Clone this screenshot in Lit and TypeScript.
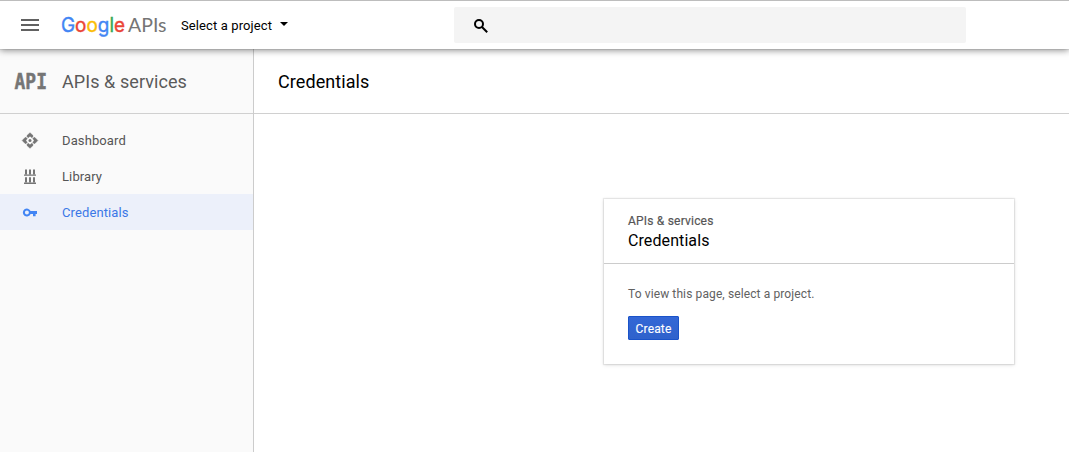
import { LitElement, html, css, svg } from "lit";
import { customElement } from "lit/decorators.js";

const dashboardIcon = svg`
  <svg viewBox="0 0 16 16" width="16" height="16" fill="currentColor">
    <circle cx="8" cy="8.5" r="1.5"/>
    <path d="M8 .7L11 3.6V4.6L9.9 5.7 8 4.2 6.1 5.7 5 4.6V3.6zM8 16.3L11 13.4V12.4L9.9 11.3 8 12.8 6.1 11.3 5 12.4V13.4zM.2 8.5L3.1 5.5H4.1L5.2 6.6 3.9 8.5 5.2 10.4 4.1 11.5H3.1zM15.8 8.5L12.9 5.5H11.9L10.8 6.6 12.1 8.5 10.8 10.4 11.9 11.5H12.9z" stroke="currentColor" stroke-width=".5"/>
  </svg>`;

const libraryIcon = svg`
  <svg viewBox="0 0 16 16" width="16" height="16" fill="currentColor">
    <path d="M3 1.4h2V6H3zM7 1.4h2V6H7zM11 1.4h2V6h-2zM2 6.4h12v1.4H2zM3 9.2h2v5H3zM7 9.2h2v5H7zM11 9.2h2v5h-2zM2 14.6h12V16H2zM3.4 6h1.2v1H3.4zM7.4 6h1.2v1H7.4zM11.4 6h1.2v1h-1.2z"/>
  </svg>`;

const keyIcon = svg`
  <svg viewBox="0 0 16 16" width="16" height="16" fill="currentColor">
    <path fill-rule="evenodd" d="M8.6 7.1A4 4 0 1 0 8.6 9.9H11v2.4h2.6V9.9H15V7.1zM4.9 6.5a2 2 0 1 1 0 4 2 2 0 0 1 0-4z"/>
  </svg>`;

@customElement("app-root")
export class AppRoot extends LitElement {
  static styles = css`
    :host {
      display: flex;
      flex-direction: column;
      height: 460px;
      padding-bottom: 8px;
      box-sizing: border-box;
      overflow: hidden;
      background: #fff;
      color: #000;
      font: 13px/20px Roboto, sans-serif;
    }
    svg { display: block; flex: none; overflow: visible; }
    .topbar {
      display: flex;
      align-items: center;
      flex: none;
      height: 49px;
      box-sizing: border-box;
      border-top: 1px solid #bdbdbd;
      background: #fff;
      box-shadow: 0 0 1px rgba(0,0,0,.35), 0 1px 7px rgba(0,0,0,.5);
      z-index: 1;
      padding-left: 21px;
    }
    .menu { display: grid; gap: 3px; width: 18px; margin: 0 23px 0 0; }
    .menu i { height: 2px; background: #616161; }
    .picker { display: flex; align-items: center; width: 273px; margin-left: 14px; margin-top: 2px; letter-spacing: .11px; }
    .caret { border: 4px solid transparent; border-top-color: #000; border-bottom: 0; margin: -5px 0 0 8px; }
    .search {
      display: flex;
      align-items: center;
      width: 512px;
      height: 36px;
      border-radius: 2px;
      background: #f4f4f4;
      padding: 2px 0 0 20px;
      box-sizing: border-box;
    }
    .body { display: flex; flex: 1; min-height: 0; }
    .side { width: 253px; border-right: 1px solid #ccc; background: #fafafa; color: #555; flex: none; }
    .side-head {
      display: flex;
      align-items: center;
      height: 64px;
      border-bottom: 1px solid #d0d0d0;
      padding-left: 14px;
      font-size: 18px;
      letter-spacing: .07px;
      color: #5a5a5a;
    }
    .side-head svg { margin-right: 15px; }
    .side-head span { padding-top: 2px; }
    .nav { padding-top: 8px; }
    .item { display: flex; align-items: center; gap: 24px; height: 36px; padding-left: 22px; letter-spacing: .11px; }
    .item span { padding-top: 2px; }
    .item svg { color: #757575; }
    .item.active { background: #ecf0fa; color: #3b78e7; }
    .item.active svg { color: #4285f4; }
    .main { flex: 1; display: flex; flex-direction: column; }
    .title { height: 64px; border-bottom: 1px solid #d0d0d0; padding-left: 24px; font-size: 18px; line-height: 65px; letter-spacing: .08px; }
    .card {
      width: 410px;
      height: 165px;
      margin: 85px 0 0 350px;
      background: #fff;
      box-shadow: 0 0 1px 1px rgba(0,0,0,.08), 0 1px 4px rgba(0,0,0,.13);
    }
    .card-head { padding: 12px 24px 0; border-bottom: 1px solid #ccc; box-sizing: border-box; height: 65px; }
    .kicker { font-size: 12px; color: #555; letter-spacing: .2px; -webkit-text-stroke: .2px #555; }
    .name { font-size: 16px; letter-spacing: .09px; }
    .card-body { padding: 20px 24px; color: #616161; font-size: 12px; letter-spacing: .11px; }
    .create {
      display: block;
      width: 51px;
      height: 24px;
      margin-top: 12px;
      padding: 2px 0 0;
      border: 1px solid #1a53c9;
      border-radius: 1px;
      background: linear-gradient(#3367d6, #2f62cb);
      color: #fff;
      font: 12px/20px Roboto, sans-serif;
      letter-spacing: .15px;
      -webkit-text-stroke: .12px #fff;
    }
  `;

  render() {
    return html`
      <header class="topbar">
        <div class="menu"><i></i><i></i><i></i></div>
        <svg width="105" height="32" viewBox="0 0 105 32" font-family="Inter, sans-serif">
          <text x="-1" y="23" font-size="20" textLength="64" lengthAdjust="spacingAndGlyphs" stroke-width=".4"><tspan fill="#4285f4" stroke="#4285f4">G</tspan><tspan fill="#ea4335" stroke="#ea4335">o</tspan><tspan fill="#fbbc05" stroke="#fbbc05">o</tspan><tspan fill="#4285f4" stroke="#4285f4">g</tspan><tspan fill="#34a853" stroke="#34a853">l</tspan><tspan fill="#ea4335" stroke="#ea4335">e</tspan></text>
          <text x="66" y="23" font-size="20" font-family="Lato, sans-serif" fill="#757575" textLength="38.5" lengthAdjust="spacingAndGlyphs">APIs</text>
        </svg>
        <div class="picker">Select a project<span class="caret"></span></div>
        <div class="search">
          <svg width="14" height="14" viewBox="0 0 14 14" fill="none" stroke="#000" stroke-width="2">
            <circle cx="5" cy="5" r="4"/><path d="M8 8l5.2 5.2"/>
          </svg>
        </div>
      </header>
      <div class="body">
        <nav class="side">
          <div class="side-head">
            <svg width="33" height="24" viewBox="0 0 33 24">
              <text x="0.5" y="20" font-family="DejaVu Sans Mono, monospace" font-weight="700" font-size="21.5" fill="#757575" stroke="#757575" stroke-width=".5" textLength="32.5" lengthAdjust="spacingAndGlyphs">API</text>
            </svg>
            <span>APIs &amp; services</span>
          </div>
          <div class="nav">
            <div class="item">${dashboardIcon}<span>Dashboard</span></div>
            <div class="item">${libraryIcon}<span>Library</span></div>
            <div class="item active">${keyIcon}<span>Credentials</span></div>
          </div>
        </nav>
        <main class="main">
          <div class="title">Credentials</div>
          <section class="card">
            <div class="card-head">
              <div class="kicker">APIs &amp; services</div>
              <div class="name">Credentials</div>
            </div>
            <div class="card-body">
              To view this page, select a project.
              <button class="create">Create</button>
            </div>
          </section>
        </main>
      </div>`;
  }
}
